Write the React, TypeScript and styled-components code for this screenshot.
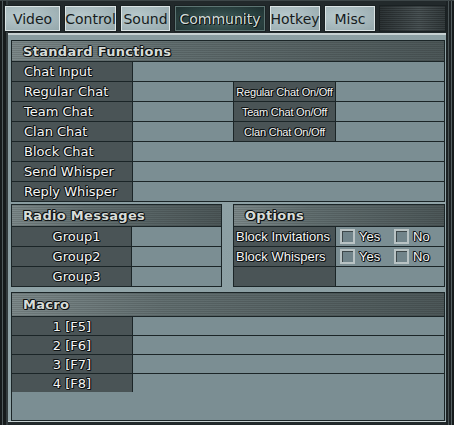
import React from 'react';
import styled, { createGlobalStyle } from 'styled-components';

const GlobalStyle = createGlobalStyle`
  html, body {
    margin: 0;
    padding: 0;
    background: #1c2224;
  }
  * {
    box-sizing: border-box;
  }
`;

const outline = `
  text-shadow: 1px 0 0 #0e1213, -1px 0 0 #0e1213, 0 1px 0 #0e1213, 0 -1px 0 #0e1213,
    1px 1px 0 #0e1213, -1px -1px 0 #0e1213;
`;

const Frame = styled.div`
  width: 454px;
  height: 425px;
  display: flex;
  flex-direction: column;
  padding: 5px 8px 0 4px;
  border-top: 1px solid #3d4648;
  background:
    linear-gradient(90deg, #161b1c 0 2px, #4f595b 2px 3px, #161b1c 3px 6px, #323b3d 6px 8px, transparent 8px),
    linear-gradient(270deg, #161b1c 0 2px, #566163 2px 3px, #1c2224 3px 5px, #4a5456 5px 6px, #1c2224 6px 8px, transparent 8px),
    #22292b;
`;

const TabBar = styled.div`
  height: 28px;
  display: flex;
  gap: 3px;
  align-items: flex-start;
  margin-top: -1px;
`;

const Tab = styled.div<{ $w: number; $active?: boolean }>`
  width: ${(p) => p.$w}px;
  flex-shrink: 0;
  height: 27px;
  display: flex;
  align-items: center;
  justify-content: center;
  border: 1px solid #1a2123;
  box-shadow: inset 0 0 0 1px ${(p) => (p.$active ? '#5d7472' : '#dbe4e5')};
  font-family: 'DejaVu Sans', sans-serif;
  font-size: 14px;
  color: ${(p) => (p.$active ? '#d3ddd9' : '#161c1d')};
  text-shadow: ${(p) => (p.$active ? '1px 1px 0 #0b1010, -1px 0 0 #0b1010' : 'none')};
  background: ${(p) =>
    p.$active
      ? 'radial-gradient(ellipse at 50% 60%, #46615f 0%, #2c4443 55%, #1d2e2e 100%)'
      : 'radial-gradient(ellipse at 30% 40%, #b9cacd 0%, #a3b5b9 60%, #93a6aa 100%)'};
`;

const TabFiller = styled.div`
  flex: 1;
  height: 27px;
  border: 1px solid #1a2123;
  background:
    repeating-linear-gradient(0deg, rgba(0, 0, 0, 0.25) 0 1px, transparent 1px 2px),
    linear-gradient(90deg, #2d3436 0%, #4a5355 60%, #353d3f 100%);
`;

const Body = styled.div`
  flex: 1;
  margin: 0 0 3px 4px;
  border-top: 2px solid #c7d1d2;
  border-bottom: 1px solid #c7d1d2;
  padding: 5px 1px 0 3px;
  display: flex;
  flex-direction: column;
  background:
    radial-gradient(ellipse at 20% 95%, #9aaeb1 0%, transparent 40%),
    radial-gradient(ellipse at 85% 30%, #94a7ab 0%, transparent 50%),
    #899ca0;
`;

const Section = styled.div<{ $w?: number; $mt?: number }>`
  ${(p) => (p.$w ? `width: ${p.$w}px; flex-shrink: 0;` : 'flex: 1; min-width: 0;')}
  margin-top: ${(p) => p.$mt ?? 0}px;
  border: 1px solid #1b2527;
  background: #7b8e93;
  display: flex;
  flex-direction: column;
`;

const Header = styled.div<{ $h: number }>`
  height: ${(p) => p.$h}px;
  display: flex;
  align-items: center;
  padding-left: 11px;
  font-family: 'DejaVu Sans', sans-serif;
  font-weight: bold;
  font-size: 13px;
  letter-spacing: 0.3px;
  color: #d7dcd9;
  ${outline}
  background:
    repeating-linear-gradient(0deg, rgba(0, 0, 0, 0.12) 0 1px, transparent 1px 2px),
    linear-gradient(90deg, #7d898a 0%, #637071 35%, #4d5859 100%);
`;

const Row = styled.div<{ $h: number }>`
  height: ${(p) => p.$h}px;
  display: flex;
  border-top: 1px solid #1b2527;
`;

const Label = styled.div<{ $w: number; $align?: string; $pl?: number }>`
  width: ${(p) => p.$w}px;
  flex-shrink: 0;
  display: flex;
  align-items: center;
  justify-content: ${(p) => p.$align ?? 'flex-start'};
  padding-left: ${(p) => p.$pl ?? 0}px;
  background: #4a5456;
  border-right: 1px solid #1b2527;
  font-family: 'DejaVu Sans', sans-serif;
  font-size: 13px;
  color: #f5f6f5;
  white-space: nowrap;
  ${outline}
`;

const NarrowLabel = styled(Label)`
  font-family: 'Liberation Sans', Arial, sans-serif;
  padding-left: 2px;
`;

const Value = styled.div<{ $w?: number }>`
  ${(p) => (p.$w ? `width: ${p.$w}px; flex-shrink: 0;` : 'flex: 1;')}
`;

const SubLabel = styled.div`
  width: 103px;
  flex-shrink: 0;
  display: flex;
  align-items: center;
  justify-content: center;
  background: #4a5456;
  border-left: 1px solid #1b2527;
  border-right: 1px solid #1b2527;
  font-family: 'Liberation Sans', Arial, sans-serif;
  font-size: 11px;
  letter-spacing: -0.2px;
  color: #f5f6f5;
  white-space: nowrap;
  ${outline}
`;

const Split = styled.div`
  display: flex;
  gap: 11px;
  margin-top: 2px;
`;

const Choices = styled.div`
  flex: 1;
  display: flex;
  align-items: center;
  padding-left: 4px;
`;

const Choice = styled.div`
  width: 54px;
  flex-shrink: 0;
  display: flex;
  align-items: center;
  gap: 4px;
  font-family: 'Liberation Sans', Arial, sans-serif;
  font-size: 13px;
  color: #f5f6f5;
  ${outline}
`;

const Box = styled.span`
  width: 15px;
  height: 15px;
  border: 2px solid #b9c3c4;
  box-shadow: inset 1px 1px 0 #3e484a;
  background: #71848a;
`;

const standard: [string, string?][] = [
  ['Chat Input'],
  ['Regular Chat', 'Regular Chat On/Off'],
  ['Team Chat', 'Team Chat On/Off'],
  ['Clan Chat', 'Clan Chat On/Off'],
  ['Block Chat'],
  ['Send Whisper'],
  ['Reply Whisper'],
];

const tabs: [string, number][] = [
  ['Video', 57],
  ['Control', 53],
  ['Sound', 51],
  ['Community', 92],
  ['Hotkey', 52],
  ['Misc', 52],
];

export default function App() {
  return (
    <>
      <GlobalStyle />
      <Frame>
        <TabBar>
          {tabs.map(([name, w]) => (
            <Tab key={name} $w={w} $active={name === 'Community'}>
              {name}
            </Tab>
          ))}
          <TabFiller />
        </TabBar>
        <Body>
          <Section>
            <Header $h={20}>Standard Functions</Header>
            {standard.map(([label, sub]) => (
              <Row key={label} $h={20}>
                <Label $w={121} $pl={12}>{label}</Label>
                {sub ? (
                  <>
                    <Value $w={100} />
                    <SubLabel>{sub}</SubLabel>
                    <Value />
                  </>
                ) : (
                  <Value />
                )}
              </Row>
            ))}
          </Section>
          <Split>
            <Section $w={211}>
              <Header $h={21}>Radio Messages</Header>
              {['Group1', 'Group2', 'Group3'].map((g) => (
                <Row key={g} $h={20}>
                  <Label $w={120} $align="center" $pl={10}>{g}</Label>
                  <Value />
                </Row>
              ))}
            </Section>
            <Section>
              <Header $h={21}>Options</Header>
              {['Block Invitations', 'Block Whispers'].map((o) => (
                <Row key={o} $h={20}>
                  <NarrowLabel $w={102}>{o}</NarrowLabel>
                  <Choices>
                    <Choice><Box />Yes</Choice>
                    <Choice><Box />No</Choice>
                  </Choices>
                </Row>
              ))}
              <Row $h={20}>
                <Label $w={102} />
                <Value />
              </Row>
            </Section>
          </Split>
          <Section $mt={5}>
            <Header $h={23}>Macro</Header>
            {['1 [F5]', '2 [F6]', '3 [F7]', '4 [F8]'].map((m) => (
              <Row key={m} $h={19}>
                <Label $w={121} $align="center">{m}</Label>
                <Value />
              </Row>
            ))}
          </Section>
        </Body>
      </Frame>
    </>
  );
}
